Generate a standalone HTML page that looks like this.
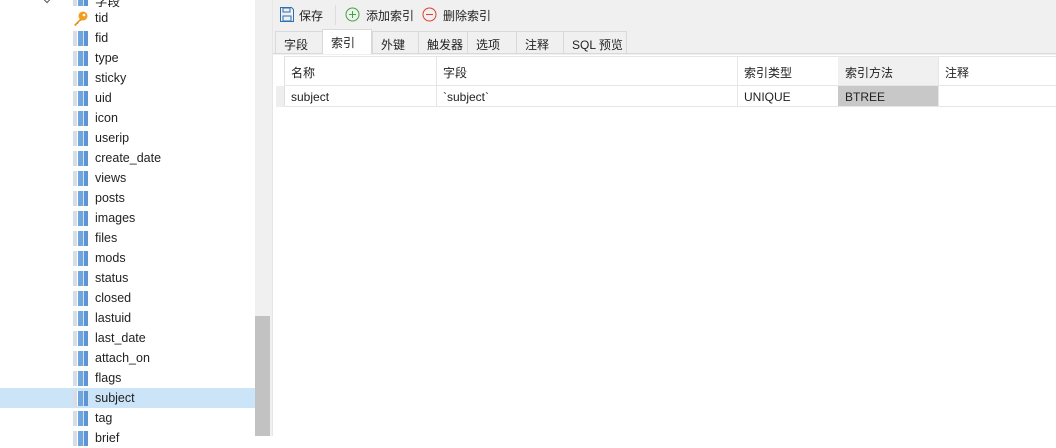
<!DOCTYPE html>
<html><head><meta charset="utf-8"><style>
*{margin:0;padding:0;box-sizing:border-box}
body{width:1056px;height:436px;overflow:hidden;background:#fff;font-family:"Liberation Sans","Noto Sans CJK SC",sans-serif;font-size:12px;color:#222;position:relative}
.a{position:absolute}
.item{position:absolute;left:0;width:255px;height:20px}
.item .ic{position:absolute;left:73px;top:3px;width:15px;height:15px;background:linear-gradient(90deg,#d6dde6 0 4px,#fff 4px 5px,#6fa6e0 5px 10px,#d6dde6 10px 11px,#5b95d6 11px 15px)}
.item span{position:absolute;left:95px;top:3px;font-size:12.5px}
.tab{position:absolute;top:31px;height:22px;border:1px solid #d9d9d9;border-bottom:none;background:#f0f0f0;padding:4px 0 0 8px;font-size:12px}
</style></head><body>
<div class="a" style="left:255px;top:0;width:18px;height:436px;background:#f0f0f0"></div>
<div class="a" style="left:255px;top:316px;width:15px;height:120px;background:#c2c2c2"></div>
<div class="a" style="left:272px;top:0;width:1px;height:436px;background:#e6e6e6"></div>
<div class="item" style="top:-12px"><div class="ic"></div><span>字段</span></div>
<div class="a" style="left:44px;top:-4px;width:6px;height:6px;border-right:1.5px solid #555;border-bottom:1.5px solid #555;transform:rotate(45deg)"></div>
<div class="item" style="top:8px"><svg class="a" style="left:72px;top:2px" width="17" height="17" viewBox="0 0 17 17"><circle cx="11" cy="6" r="4.5" fill="#f0a020"/><circle cx="12" cy="5" r="1.3" fill="#fff"/><path d="M8 9 L2 15 L4 16 L5 14 L6 14 L7 12 L10 10Z" fill="#e69010"/></svg><span>tid</span></div>
<div class="item" style="top:28px"><div class="ic"></div><span>fid</span></div>
<div class="item" style="top:48px"><div class="ic"></div><span>type</span></div>
<div class="item" style="top:68px"><div class="ic"></div><span>sticky</span></div>
<div class="item" style="top:88px"><div class="ic"></div><span>uid</span></div>
<div class="item" style="top:108px"><div class="ic"></div><span>icon</span></div>
<div class="item" style="top:128px"><div class="ic"></div><span>userip</span></div>
<div class="item" style="top:148px"><div class="ic"></div><span>create_date</span></div>
<div class="item" style="top:168px"><div class="ic"></div><span>views</span></div>
<div class="item" style="top:188px"><div class="ic"></div><span>posts</span></div>
<div class="item" style="top:208px"><div class="ic"></div><span>images</span></div>
<div class="item" style="top:228px"><div class="ic"></div><span>files</span></div>
<div class="item" style="top:248px"><div class="ic"></div><span>mods</span></div>
<div class="item" style="top:268px"><div class="ic"></div><span>status</span></div>
<div class="item" style="top:288px"><div class="ic"></div><span>closed</span></div>
<div class="item" style="top:308px"><div class="ic"></div><span>lastuid</span></div>
<div class="item" style="top:328px"><div class="ic"></div><span>last_date</span></div>
<div class="item" style="top:348px"><div class="ic"></div><span>attach_on</span></div>
<div class="item" style="top:368px"><div class="ic"></div><span>flags</span></div>
<div class="item" style="top:388px;background:#cce4f7"><div class="ic"></div><span>subject</span></div>
<div class="item" style="top:408px"><div class="ic"></div><span>tag</span></div>
<div class="item" style="top:428px"><div class="ic"></div><span>brief</span></div>

<div class="a" style="left:273px;top:0;width:783px;height:55px;background:#f0f0f0"></div>
<svg class="a" style="left:279px;top:6px" width="16" height="17" viewBox="0 0 16 17"><path d="M1.5 1.5h11l2 2v12h-13z" fill="none" stroke="#2d6fb0"/><rect x="4" y="2" width="7" height="4" fill="none" stroke="#2d6fb0"/><rect x="4" y="10" width="8" height="5" fill="none" stroke="#2d6fb0"/></svg>
<div class="a" style="left:299px;top:7px">保存</div>
<div class="a" style="left:335px;top:5px;width:1px;height:20px;background:#ddd"></div>
<svg class="a" style="left:345px;top:7px" width="15" height="15"><circle cx="7.5" cy="7.5" r="6.5" fill="none" stroke="#3aa83a"/><path d="M7.5 4v7M4 7.5h7" stroke="#3aa83a"/></svg>
<div class="a" style="left:366px;top:7px">添加索引</div>
<svg class="a" style="left:422px;top:7px" width="15" height="15"><circle cx="7.5" cy="7.5" r="6.5" fill="none" stroke="#e04030"/><path d="M4 7.5h7" stroke="#e04030"/></svg>
<div class="a" style="left:443px;top:7px">删除索引</div>
<div class="a" style="left:273px;top:53px;width:783px;height:1px;background:#d9d9d9"></div>
<div class="tab" style="left:275px;width:48px">字段</div>
<div class="tab" style="left:322px;width:50px;top:29px;height:25px;background:#fff">索引</div>
<div class="tab" style="left:372px;width:47px">外键</div>
<div class="tab" style="left:418px;width:50px">触发器</div>
<div class="tab" style="left:467px;width:50px">选项</div>
<div class="tab" style="left:516px;width:48px">注释</div>
<div class="tab" style="left:563px;width:64px">SQL 预览</div>

<div class="a" style="left:284px;top:56px;width:772px;height:1px;background:#e6e6e6"></div>
<div class="a" style="left:284px;top:56px;width:1px;height:51px;background:#e0e0e0"></div>
<div class="a" style="left:276px;top:86px;width:8px;height:21px;background:#eee"></div>
<div class="a" style="left:838px;top:57px;width:101px;height:28px;background:#f0f0f0"></div>
<div class="a" style="left:838px;top:86px;width:101px;height:20px;background:#c8c8c8"></div>
<div class="a" style="left:284px;top:85px;width:772px;height:1px;background:#e6e6e6"></div>
<div class="a" style="left:284px;top:106px;width:772px;height:1px;background:#e6e6e6"></div>
<div class="a" style="left:436px;top:57px;width:1px;height:50px;background:#e6e6e6"></div>
<div class="a" style="left:737px;top:57px;width:1px;height:50px;background:#e6e6e6"></div>
<div class="a" style="left:938px;top:57px;width:1px;height:50px;background:#e6e6e6"></div>
<div class="a" style="left:291px;top:64px">名称</div>
<div class="a" style="left:443px;top:64px">字段</div>
<div class="a" style="left:744px;top:64px">索引类型</div>
<div class="a" style="left:845px;top:64px">索引方法</div>
<div class="a" style="left:945px;top:64px">注释</div>
<div class="a" style="left:291px;top:90px">subject</div>
<div class="a" style="left:443px;top:90px">`subject`</div>
<div class="a" style="left:744px;top:90px">UNIQUE</div>
<div class="a" style="left:845px;top:90px">BTREE</div>
</body></html>
